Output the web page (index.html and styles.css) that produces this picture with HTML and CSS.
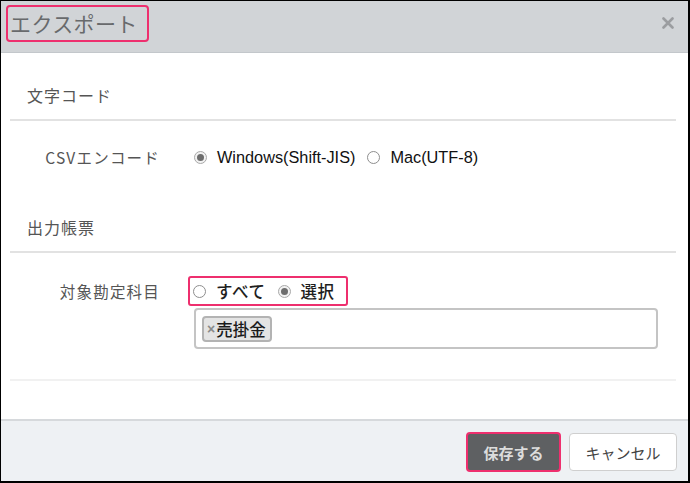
FILE: index.html
```html
<!DOCTYPE html>
<html lang="ja">
<head>
<meta charset="utf-8">
<link rel="stylesheet" href="styles.css">
</head>
<body>
<div class="frame">
  <header class="hdr">
    <div class="title-box"><span class="title">エクスポート</span></div>
    <span class="close" aria-label="close">
      <svg width="12" height="12" viewBox="0 0 12 12"><path d="M1.5 1.5 L10.5 10.5 M10.5 1.5 L1.5 10.5" stroke="#9b9da0" stroke-width="2.6" stroke-linecap="round"/></svg>
    </span>
  </header>
  <main class="body">
    <div class="sec-title sec1">文字コード</div>
    <div class="row row1">
      <div class="label">CSVエンコード</div>
      <div class="opts plain">
        <span class="radio on"></span><span class="opt-text latin">Windows(Shift-JIS)</span>
        <span class="radio"></span><span class="opt-text latin">Mac(UTF-8)</span>
      </div>
    </div>
    <div class="sec-title sec2">出力帳票</div>
    <div class="row row2">
      <div class="label">対象勘定科目</div>
      <div class="ctrl">
        <div class="opts boxed">
          <span class="radio"></span><span class="opt-text jp">すべて</span>
          <span class="radio on"></span><span class="opt-text jp last">選択</span>
        </div>
        <div class="select">
          <span class="tag"><span class="tag-x">×</span>売掛金</span>
        </div>
      </div>
    </div>
    <div class="end-line"></div>
  </main>
  <footer class="ftr">
    <button class="btn save">保存する</button>
    <button class="btn cancel">キャンセル</button>
  </footer>
</div>
</body>
</html>
```
FILE: styles.css
```css
* { box-sizing: border-box; }
html, body { margin: 0; padding: 0; background: #fff; }
body { font-family: "Noto Sans CJK JP", "Liberation Sans", sans-serif; }

.frame {
  width: 690px;
  height: 483px;
  border-style: solid;
  border-color: #000;
  border-width: 1px 2px 2px 1px;
  display: flex;
  flex-direction: column;
  overflow: hidden;
}

.hdr {
  height: 52px;
  flex: none;
  background: #d1d4d7;
  border-bottom: 1px solid #c3c7cb;
  display: flex;
  align-items: flex-start;
  justify-content: space-between;
  padding: 4px 14px 0 5px;
}
.title-box {
  height: 37px;
  border: 2px solid #ee2f6e;
  border-radius: 4px;
  padding: 0 9px 0 2px;
  display: flex;
  align-items: center;
}
.title {
  font-size: 21px;
  color: #686a6c;
  line-height: 1;
  letter-spacing: 0.4px;
}
.close {
  margin-top: 12px;
  display: block;
  width: 12px;
  height: 12px;
}
.close svg { display: block; }

.body {
  flex: 1;
  padding: 0 12px 0 9px;
  display: flex;
  flex-direction: column;
}
.sec-title {
  font-size: 16px;
  color: #555;
  line-height: 24px;
  padding-left: 17px;
  padding-bottom: 12px;
  border-bottom: 2px solid #e2e2e2;
  letter-spacing: 1px;
}
.sec1 { margin-top: 30px; }
.sec2 { margin-top: 43px; }

.row { display: flex; align-items: flex-start; }
.label {
  width: 150px;
  flex: none;
  text-align: right;
  font-size: 15.5px;
  color: #555;
  line-height: 30px;
  letter-spacing: 1.2px;
}
.row1 { margin-top: 21px; height: 30px; }
.row2 { margin-top: 23px; }

.opts {
  display: flex;
  align-items: center;
  height: 30px;
  white-space: nowrap;
}
.opts.plain { margin-left: 34px; }
.ctrl { margin-left: 28px; display: flex; flex-direction: column; }
.opts.boxed {
  width: 160px;
  height: 30px;
  border: 2px solid #ee2f6e;
  border-radius: 3px;
  padding-left: 3px;
}

.radio {
  width: 13px;
  height: 13px;
  border-radius: 50%;
  border: 1px solid #8e8e8e;
  background: #fff;
  flex: none;
  position: relative;
  margin-right: 10px;
}
.radio.on {
  border-color: #a9a9a9;
  background: #f2f2f2;
}
.radio.on::after {
  content: "";
  position: absolute;
  left: 2px;
  top: 2px;
  width: 7px;
  height: 7px;
  border-radius: 50%;
  background: #6d6d6d;
}
.opt-text { margin-right: 12px; color: #1b1b1b; flex: none; white-space: nowrap; }
.opt-text.last { margin-right: 0; }
.opt-text.latin {
  font-family: "Liberation Sans", Arial, sans-serif;
  font-size: 16.3px;
  color: #111;
}
.opt-text.jp {
  font-size: 16.5px;
  color: #1e1e1e;
  font-weight: 500;
  letter-spacing: 0.6px;
}

.select {
  margin-top: 2px;
  margin-left: 6px;
  width: 464px;
  height: 41px;
  border: 2px solid #c4c4c4;
  border-radius: 4px;
  padding: 6px 6px;
  display: flex;
  align-items: flex-start;
}
.tag {
  height: 26px;
  padding: 0 4px 0 3px;
  background: #e4e4e4;
  border: 2px solid #b3b3b3;
  border-radius: 4px;
  font-size: 16.5px;
  font-weight: 500;
  color: #1a1a1a;
  display: flex;
  align-items: center;
  line-height: 1;
}
.tag-x { color: #8a8a8a; font-size: 14px; margin-right: 1px; font-family: "Liberation Sans", sans-serif; font-weight: bold; }

.end-line {
  margin-top: 30px;
  border-top: 2px solid #f1f1f1;
}

.ftr {
  height: 62px;
  flex: none;
  background: #eef1f4;
  border-top: 2px solid #d6d9dc;
  display: flex;
  justify-content: flex-end;
  align-items: flex-start;
  padding: 11px 11px 0 0;
  gap: 8px;
}
.btn {
  font-family: "Noto Sans CJK JP", sans-serif;
  font-size: 15px;
  border-radius: 4px;
  cursor: pointer;
  padding: 0;
}
.save {
  width: 95px;
  height: 40px;
  background: #5e6062;
  color: #dcdcdc;
  font-weight: bold;
  border: 2px solid #ee2f6e;
}
.cancel {
  margin-top: 1px;
  width: 108px;
  height: 38px;
  background: #fff;
  color: #444;
  border: 1px solid #cfcfcf;
  border-radius: 4px;
}
```
